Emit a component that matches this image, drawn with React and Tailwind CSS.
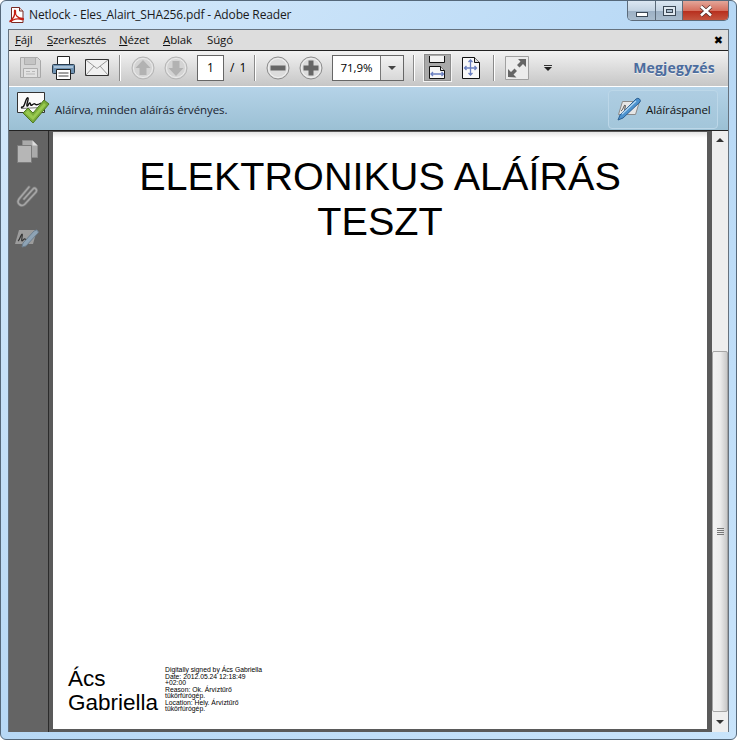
import React from 'react';

const Separator = ({ className }) => (
    <div className={`h-[26px] w-[2px] border-r border-white bg-[#8a8a8a] ${className}`} />
);

const PdfIcon = () => (
    <svg width="16" height="16" viewBox="0 0 16 16" className="shrink-0">
        <path d="M2.5 .5h8l3.500 3.500v11.500h-11.500z" fill="#fff" stroke="#7a2a24" />
        <path d="M10.500 .5v3.500h3.500" fill="#e8d5d2" stroke="#7a2a24" />
        <path d="M1 14c3-2 5-6 4.500-9.500-.3-2 1.500-1.500 1 .5-.6 3 2 6 7 6.500 1.500.2 1 1.500-.5 1-3-.8-6-1-9 .5-1 .5-2 1.500-3 1.500z" fill="none" stroke="#c41f14" strokeWidth="1.300" />
    </svg>
);

const WindowButtons = () => (
    <div className="flex h-[20px] w-[102px] shrink-0 overflow-hidden rounded-b-[5px] border border-t-0 border-[#5c6b7a]">
        <div className="flex w-[28px] items-end justify-center border-r border-[#5c6b7a] bg-[linear-gradient(#dbe7f2_0%,#c3d3e2_50%,#9db1c5_55%,#a9bccd_100%)] pb-[3px]">
            <div className="h-[5px] w-[12px] border border-[#3a4754] bg-white" />
        </div>
        <div className="flex w-[27px] items-center justify-center border-r border-[#5c6b7a] bg-[linear-gradient(#dbe7f2_0%,#c3d3e2_50%,#9db1c5_55%,#a9bccd_100%)]">
            <div className="flex h-[10px] w-[13px] items-center justify-center border border-[#3a4754] bg-[#dfe8f0]">
                <div className="h-[4px] w-[7px] border border-[#3a4754] bg-[#a9bccd]" />
            </div>
        </div>
        <div className="flex flex-1 items-center justify-center bg-[linear-gradient(#e3a699_0%,#d6705f_50%,#b8301f_55%,#c4553f_100%)]">
            <svg width="14" height="12" viewBox="0 0 14 12">
                <path d="M2 1.500l10 9M12 1.500l-10 9" stroke="#4a2a26" strokeWidth="4" />
                <path d="M2 1.500l10 9M12 1.500l-10 9" stroke="#fff" strokeWidth="2.600" />
            </svg>
        </div>
    </div>
);

const FloppyIcon = () => (
    <svg width="21" height="21" viewBox="0 0 21 21" className="shrink-0">
        <path d="M.5 .5h17l3 3v17h-20z" fill="#d6d6d6" stroke="#a8a8a8" />
        <path d="M4.500 .5h11v7h-11z" fill="#c4c4c4" stroke="#adadad" />
        <path d="M3.500 11.500h14v9h-14z" fill="#e2e2e2" stroke="#adadad" />
        <path d="M6 14.500h4M6 17h9M12 14.500h3" stroke="#b8b8b8" />
    </svg>
);

const PrinterIcon = () => (
    <svg width="23" height="24" viewBox="0 0 23 24" className="shrink-0">
        <path d="M5.500 .5h12v9h-12z" fill="#fff" stroke="#222" />
        <path d="M1.500 8.500h20q1 0 1 1v7q0 1-1 1h-20q-1 0-1-1v-7q0-1 1-1z" fill="#6f93b3" stroke="#2c3e50" />
        <path d="M2 10h19v2h-19z" fill="#a9c2d8" />
        <path d="M4.500 13.500h14v10h-14z" fill="#fff" stroke="#222" />
        <path d="M6.500 17h10M6.500 20h10" stroke="#444" />
    </svg>
);

const MailIcon = () => (
    <svg width="24" height="17" viewBox="0 0 24 17" className="shrink-0">
        <path d="M.5 .5h23v16h-23z" fill="#f1f1f1" stroke="#333" />
        <path d="M1 1l11 8.500 11-8.500M1 16l8-9M23 16l-8-9" fill="none" stroke="#9a9a9a" />
    </svg>
);

const ArrowCircle = ({ down }) => (
    <svg width="24" height="24" viewBox="0 0 24 24" className="shrink-0">
        <circle cx="12" cy="12" r="11" fill="#d4d4d4" stroke="#b4b4b4" strokeWidth="1" />
        <circle cx="12" cy="12" r="9.500" fill="none" stroke="#ececec" strokeWidth="1" />
        <path
            d={down ? 'M8.500 5h7v7h4l-7.500 8-7.500-8h4z' : 'M12 4l7.500 8h-4v7h-7v-7h-4z'}
            fill="#b2b2b2"
        />
    </svg>
);

const ZoomCircle = ({ plus }) => (
    <svg width="24" height="24" viewBox="0 0 24 24" className="shrink-0">
        <circle cx="12" cy="12" r="11" fill="#dcdcdc" stroke="#8c8c8c" strokeWidth="1" />
        <circle cx="12" cy="12" r="9.500" fill="none" stroke="#f2f2f2" strokeWidth="1" />
        {plus
            ? <path d="M9.500 4.500h5v5h5v5h-5v5h-5v-5h-5v-5h5z" fill="#666" />
            : <path d="M4.500 9.500h15v5h-15z" fill="#666" />}
    </svg>
);

const FitWidthIcon = () => (
    <div className="flex h-[27px] w-[27px] shrink-0 items-center justify-center border border-[#8c8c8c] bg-[#a9a9a9] shadow-[0_0_0_1px_#f4f4f4]">
        <svg width="17" height="23" viewBox="0 0 17 23">
            <path d="M.5 0v6.500h15v-6.500" fill="#f2f2f2" stroke="#111" />
            <path d="M.5 10.500h11l4 4v8h-15z" fill="#f7f7f7" stroke="#111" />
            <path d="M11.500 10.500v4h4" fill="#ddd" stroke="#111" />
            <path d="M2 18h12.500M4 16l-2 2 2 2M12.500 16l2 2-2 2" fill="none" stroke="#6a7fc0" strokeWidth="1.300" />
        </svg>
    </div>
);

const FitPageIcon = () => (
    <svg width="18" height="22" viewBox="0 0 18 22" className="shrink-0">
        <path d="M.5 .5h12l5 5v16h-17z" fill="#f8f8f8" stroke="#111" />
        <path d="M12.500 .5v5h5" fill="#ddd" stroke="#111" />
        <path d="M8.500 3v15M2.500 11h12M6.500 5l2-2 2 2M6.500 16l2 2 2-2M4.500 9l-2 2 2 2M12.500 9l2 2-2 2" fill="none" stroke="#6a7fc0" strokeWidth="1.300" />
    </svg>
);

const FullScreenIcon = () => (
    <svg width="24" height="24" viewBox="0 0 24 24" className="shrink-0">
        <path d="M.5 .5h23v23h-23z" fill="#ececec" stroke="#a0a0a0" />
        <path d="M13 3h8v8l-3-3-3.500 3.500-2.500-2.500 3.500-3.500z" fill="#666" />
        <path d="M3 21v-8l3 3 3.500-3.500 2.500 2.500-3.500 3.500 3 3z" fill="#666" />
    </svg>
);

const SignedIcon = () => (
    <svg width="33" height="33" viewBox="0 0 33 33" className="shrink-0">
        <path d="M.5 .5h27v20h-27z" fill="#fafafa" stroke="#333" />
        <path d="M4 15c2 1 3-1 4-4s2-6 3-5-2 7-1 8 2-4 3-3 0 3 2 2 2-2 3-1 3 1 6-1" fill="none" stroke="#111" strokeWidth="1.400" />
        <path d="M4 16.500l20-1" stroke="#777" />
        <path d="M6 21l5-5 5 5 11-13 5 4-16 19z" fill="#79ab3a" stroke="#4e7a22" />
        <path d="M8 21l3-3 5 6 11-13 2 2-13 15z" fill="#98c94f" />
    </svg>
);

const PenPanelIcon = () => (
    <svg width="25" height="24" viewBox="0 0 25 24" className="shrink-0">
        <path d="M5.500 4.500h17l-4 13h-17z" fill="#e6e6e6" stroke="#8a8a8a" />
        <path d="M4 14c2-1 3-6 4-6s-1 6 0 6 2-3 3-2" fill="none" stroke="#444" />
        <path d="M1 23l2-5 16-16q2-1.500 3.500 0t.5 3l-17 16z" fill="#4d93cf" stroke="#2a5f92" />
        <path d="M5 17l14-13" stroke="#b6d9f2" strokeWidth="1.200" />
    </svg>
);

const PagesIcon = () => (
    <svg width="21" height="23" viewBox="0 0 21 23">
        <path d="M5.500 .5h10l5 5v12h-15z" fill="#aaa" stroke="#8d8d8d" />
        <path d="M15.500 .5v5h5z" fill="#ddd" />
        <path d="M.5 5.500h14v17h-14z" fill="#b6b6b6" stroke="#7c7c7c" />
    </svg>
);

const ClipIcon = () => (
    <svg width="22" height="24" viewBox="0 0 22 24">
        <path d="M8 15l9-10c2-2 4.500.5 3 3l-11 12c-3.500 3.500-9-.5-6-5l10-12" fill="none" stroke="#7a7a7a" strokeWidth="3" strokeLinecap="round" />
        <path d="M8 15l9-10c2-2 4.500.5 3 3l-11 12c-3.500 3.500-9-.5-6-5l10-12" fill="none" stroke="#a6a6a6" strokeWidth="1.600" strokeLinecap="round" />
    </svg>
);

const RailPenIcon = () => (
    <svg width="24" height="19" viewBox="0 0 24 19">
        <path d="M4 1h18l-4 14h-18z" fill="#9c9c9c" />
        <path d="M3 12c2-1 3-7 4-7s-1 7 0 7 2-3 3-2 2 1 3 0" fill="none" stroke="#333" strokeWidth="1.200" />
        <path d="M7 18l1-4 11-12q3-2 4 0t-1 3l-11 12z" fill="#8ea3b5" stroke="#6d7f8e" />
    </svg>
);

const Scrollbar = () => (
    <div className="flex w-[16px] shrink-0 flex-col bg-[#eeeeee]">
        <div className="flex h-[17px] shrink-0 items-center justify-center">
            <div className="h-0 w-0 border-x-[4px] border-b-[4px] border-x-transparent border-b-[#333]" />
        </div>
        <div className="h-[203px] shrink-0" />
        <div className="flex h-[361px] shrink-0 items-center justify-center rounded-[2px] border border-[#a5a5a5] bg-gradient-to-r from-[#f3f3f3] via-[#ededed] to-[#c8c8c8]">
            <div className="flex w-[7px] flex-col gap-[1px]">
                <div className="h-[1px] bg-[#777]" />
                <div className="h-[1px] bg-[#777]" />
                <div className="h-[1px] bg-[#777]" />
                <div className="h-[1px] bg-[#777]" />
            </div>
        </div>
        <div className="flex flex-1 items-center justify-center">
            <div className="h-0 w-0 border-x-[4px] border-t-[4px] border-x-transparent border-t-[#333]" />
        </div>
    </div>
);

const App = () => {
    const menus = [
        { key: 'F', rest: 'ájl', pre: '', width: 'w-[32px]', spacing: 'tracking-[-0.15px]' },
        { key: 'S', rest: 'zerkesztés', pre: '', width: 'w-[72px]', spacing: 'tracking-[-0.3px]' },
        { key: 'N', rest: 'ézet', pre: '', width: 'w-[44px]', spacing: 'tracking-[-0.15px]' },
        { key: 'A', rest: 'blak', pre: '', width: 'w-[44px]', spacing: 'tracking-[-0.15px]' },
        { key: 'g', rest: 'ó', pre: 'Sú', width: 'w-[40px]', spacing: 'tracking-[-0.15px]' },
    ];

    return (
        <div className="h-[740px] w-[737px] bg-white">
            <div className="flex h-[740px] w-[737px] flex-col overflow-hidden rounded-[6px] border border-[#55687a] bg-gradient-to-br from-[#d6eafb] via-[#b7d8f5] to-[#c9e4fb] font-['Open_Sans',sans-serif] text-[12px] text-black">
                <div className="flex h-[28px] shrink-0 items-start pl-[8px] pr-[7px]">
                    <div className="mt-[6px] flex items-center gap-[4px]">
                        <PdfIcon />
                        <span className="whitespace-nowrap text-[12px] leading-[16px] tracking-[-0.15px] text-[#1a1a1a]">
                            Netlock - Eles_Alairt_SHA256.pdf - Adobe Reader
                        </span>
                    </div>
                    <div className="flex-1" />
                    <WindowButtons />
                </div>

                <div className="mx-[7px] flex h-[703px] flex-col rounded-t-[1px] border border-b-0 border-[#66727e] bg-[#5a5a5a]">
                    <div className="flex h-[20px] shrink-0 items-center bg-[#dddddd] pl-[6px] pr-[5px]">
                        {menus.map((m) => (
                            <span key={m.key} className={`${m.width} ${m.spacing} shrink-0 whitespace-nowrap text-[11.5px] leading-[16px] text-[#111]`}>
                                {m.pre}<span className="underline">{m.key}</span>{m.rest}
                            </span>
                        ))}
                        <div className="flex-1" />
                        <span className="font-['DejaVu_Sans',sans-serif] text-[11px] font-bold leading-none">✖</span>
                    </div>

                    <div className="flex h-[37px] shrink-0 items-center border-y border-y-[#222] border-b-white bg-gradient-to-b from-[#f2f2f2] to-[#c6c6c6] pb-[2px] pr-[13px]">
                        <div className="ml-[11px]"><FloppyIcon /></div>
                        <div className="ml-[11px]"><PrinterIcon /></div>
                        <div className="ml-[10px]"><MailIcon /></div>
                        <Separator className="ml-[10px]" />
                        <div className="ml-[10px]"><ArrowCircle /></div>
                        <div className="ml-[9px]"><ArrowCircle down /></div>
                        <div className="ml-[9px] flex h-[26px] w-[27px] items-center justify-center border border-[#666] bg-white">1</div>
                        <span className="ml-[6px] w-[22px] shrink-0 whitespace-nowrap [word-spacing:2px]">/ 1</span>
                        <Separator className="ml-[2px]" />
                        <div className="ml-[10px]"><ZoomCircle /></div>
                        <div className="ml-[9px]"><ZoomCircle plus /></div>
                        <div className="ml-[9px] flex h-[26px] w-[72px] border border-[#666] bg-white">
                            <div className="flex w-[47px] items-center justify-center text-[11.5px]">71,9%</div>
                            <div className="flex flex-1 items-center justify-center border-l border-[#777] bg-gradient-to-b from-[#f2f2f2] to-[#d8d8d8]">
                                <div className="h-0 w-0 border-x-[4px] border-t-[4px] border-x-transparent border-t-[#444]" />
                            </div>
                        </div>
                        <Separator className="ml-[9px]" />
                        <div className="ml-[9px]"><FitWidthIcon /></div>
                        <div className="ml-[11px]"><FitPageIcon /></div>
                        <Separator className="ml-[13px]" />
                        <div className="ml-[10px]"><FullScreenIcon /></div>
                        <div className="ml-[14px] flex w-[9px] flex-col items-center gap-[1px]">
                            <div className="h-[1px] w-[8px] bg-[#333]" />
                            <div className="h-0 w-0 border-x-[4px] border-t-[4px] border-x-transparent border-t-[#222]" />
                        </div>
                        <div className="flex-1" />
                        <span className="text-[14px] font-bold leading-none tracking-[0.2px] text-[#4b6c9e] [text-shadow:0_1px_0_#eeeeee]">Megjegyzés</span>
                    </div>

                    <div className="flex h-[44px] shrink-0 items-center border-b border-[#222] bg-gradient-to-b from-[#b5d3e8] to-[#9bc0d4] pl-[8px] pr-[10px]">
                        <SignedIcon />
                        <span className="ml-[5px] whitespace-nowrap pt-[3px] text-[11.5px] tracking-[-0.1px] text-[#1b2530]">Aláírva, minden aláírás érvényes.</span>
                        <div className="flex-1" />
                        <div className="mt-[1px] flex h-[39px] w-[110px] items-center gap-[4px] rounded-[4px] border border-[#bcd7e8] bg-gradient-to-b from-[#aecde2] to-[#a3c6da] pl-[8px]">
                            <PenPanelIcon />
                            <span className="whitespace-nowrap pt-[2px] text-[11.5px] tracking-[-0.1px] text-[#111]">Aláíráspanel</span>
                        </div>
                    </div>

                    <div className="flex min-h-0 flex-1">
                        <div className="flex w-[40px] shrink-0 flex-col items-center gap-[21px] border-r border-[#2b2b2b] bg-[#646464] pr-[3px] pt-[9px]">
                            <PagesIcon />
                            <ClipIcon />
                            <RailPenIcon />
                        </div>
                        <div className="flex min-w-0 flex-1 pb-[3px] pl-[4px] pr-[5px] pt-[1px]">
                            <div className="flex flex-1 flex-col justify-between bg-gradient-to-b from-[#e4e4e4] from-0% via-white via-1% to-white">
                                <h1 className="pt-[22px] text-center font-['Liberation_Sans',sans-serif] text-[39.6px] font-normal leading-[45px]">
                                    ELEKTRONIKUS ALÁÍRÁS<br />TESZT
                                </h1>
                                <div className="flex items-start pb-[14px] pl-[15px] font-['Liberation_Sans',sans-serif]">
                                    <div className="w-[97px] shrink-0 text-[22.5px] leading-[24px]">Ács<br />Gabriella</div>
                                    <div className="w-[105px] text-[6.8px] leading-[6.5px]">
                                        Digitally signed by Ács Gabriella<br />
                                        Date: 2012.05.24 12:18:49<br />
                                        +02:00<br />
                                        Reason: Ok. Árvíztűrő<br />
                                        tükörfúrógép.<br />
                                        Location: Hely. Árvíztűrő<br />
                                        tükörfúrógép.
                                    </div>
                                </div>
                            </div>
                        </div>
                        <Scrollbar />
                    </div>
                </div>
            </div>
        </div>
    );
};

export default App;
